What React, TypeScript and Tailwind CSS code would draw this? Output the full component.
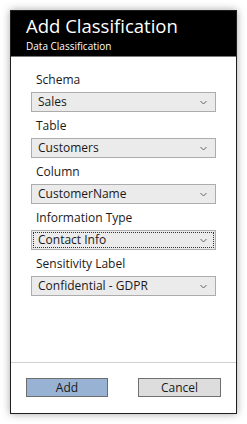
import React from "react";

const font = { fontFamily: '"Open Sans", "Noto Sans", sans-serif' };

function Chevron() {
  return (
    <svg width="7" height="5" viewBox="0 0 7 5" className="shrink-0">
      <path d="M0.5 1 L3.5 4 L6.5 1" fill="none" stroke="#606060" strokeWidth="1" />
    </svg>
  );
}

function Field({ label, value, focused }: { label: string; value: string; focused?: boolean }) {
  return (
    <div className="flex flex-col mt-[4px] first:mt-0">
      <div className="h-[20px] leading-[20px] pl-[5px] text-[12px] text-[#1a1a1a]">{label}</div>
      <div className="mt-[2px] h-[20px] border border-[#acacac] bg-[#ebebeb] p-[1px]">
        <div
          className={
            "h-full flex items-center justify-between pl-[4px] pr-[6px] " +
            (focused ? "border border-dotted border-[#333333]" : "border border-transparent")
          }
        >
          <span className="text-[12px] leading-none text-[#1a1a1a]">{value}</span>
          <Chevron />
        </div>
      </div>
    </div>
  );
}

export default function App() {
  return (
    <div className="w-[247px] h-[424px] bg-white p-[10px]" style={font}>
      <div className="h-[404px] border border-[#1f1f1f] bg-white flex flex-col shadow-[0_0_8px_rgba(0,0,0,0.35)]">
        <div className="h-[46px] bg-black border-b border-[#7a7a7a] pl-[15px] flex flex-col">
          <div className="text-white text-[18.5px] leading-[20px] mt-[5px]">Add Classification</div>
          <div className="text-white text-[10px] leading-[12px] mt-[4px]">Data Classification</div>
        </div>
        <div className="flex-1 flex flex-col px-[20px] pt-[13px]">
          <Field label="Schema" value="Sales" />
          <Field label="Table" value="Customers" />
          <Field label="Column" value="CustomerName" />
          <Field label="Information Type" value="Contact Info" focused />
          <Field label="Sensitivity Label" value="Confidential - GDPR" />
        </div>
        <div className="h-[51px] border-t border-[#d0d0d0] flex items-start pt-[15px] pl-[15px]">
          <button className="w-[82px] h-[19px] border border-[#6d6d6d] bg-[#97b2d3] text-[12px] leading-none text-[#1a1a1a]">
            Add
          </button>
          <button className="ml-[30px] w-[83px] h-[19px] border border-[#707070] bg-[#dddddd] text-[12px] leading-none text-[#1a1a1a]">
            Cancel
          </button>
        </div>
      </div>
    </div>
  );
}
